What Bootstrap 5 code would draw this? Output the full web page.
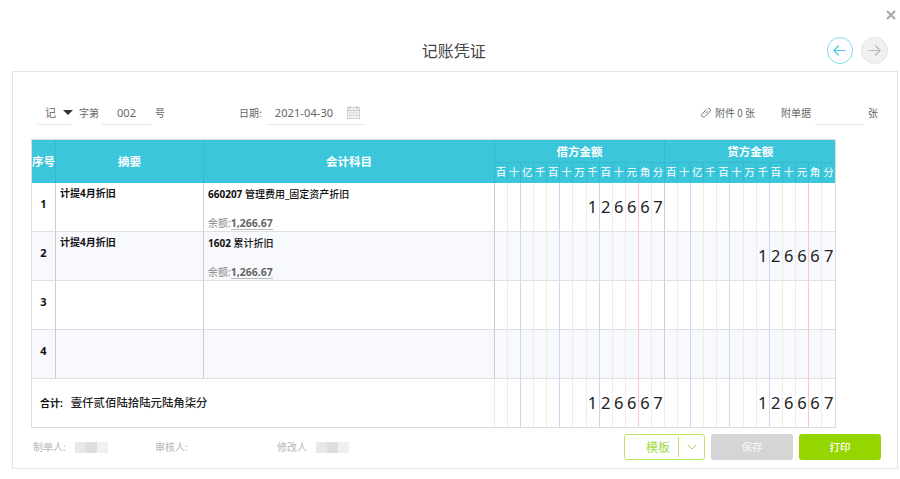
<!DOCTYPE html>
<html lang="zh">
<head>
<meta charset="utf-8">
<title>记账凭证</title>
<link href="https://cdn.jsdelivr.net/npm/bootstrap@5.3.0/dist/css/bootstrap.min.css" rel="stylesheet">
<style>
html,body{height:479px;overflow:hidden;background:#fff}
body{font-family:"Noto Sans","Noto Sans CJK SC",sans-serif;font-size:10px;color:#666;line-height:1.4}
.topline{height:37px;padding:10px 4px 0 0}
.closer{background:none;border:0;padding:0;width:10px;height:10px;display:block;line-height:0}
.headline{display:grid;grid-template-columns:1fr auto 1fr;align-items:center;height:27px;margin-bottom:7px;padding:0 12.5px 0 20px}
.headline h1{font-family:"Noto Sans CJK SC",sans-serif;font-size:16px;font-weight:400;color:#444;margin:0;padding-top:1px}
.circ{width:26.5px;height:26.5px;border-radius:50%;padding:0;display:flex;align-items:center;justify-content:center;background:#fff;border:1px solid #7fdcec;line-height:0}
.circ.off{background:#f0f0f0;border-color:#e4e4e4}
.sheet{margin-left:12px;width:886px;height:398px;border:1px solid #e4e4e4;padding:25px 16px 0 18px}
.bar{height:28px;padding:0 3px 0 6px;margin-bottom:14px;font-family:"Noto Sans CJK SC",sans-serif;color:#666}
.bar span{padding-top:4px}
.under{height:28px;border-bottom:1px solid #e6e6e6;display:flex;align-items:center}
.kind{width:34px;padding-left:8px;font-size:11px}
.tri{width:0;height:0;border-left:5px solid transparent;border-right:5px solid transparent;border-top:5px solid #333;margin:4px 0 0 7px}
.bar .ln{border:0;border-bottom:1px solid #e6e6e6;border-radius:0;height:28px;padding:4px 0 0;background:transparent;font:11px "Noto Sans","Noto Sans CJK SC",sans-serif;color:#666;box-shadow:none}
.w49{width:49px;flex:none}
.w97{width:97px;padding-left:7px;flex:none}
.datev{font:11px "Noto Sans",sans-serif;letter-spacing:.1px}
.gl8{margin-left:8px}.gl3{margin-left:3px}.gl4{margin-left:4px}.gl74{margin-left:74px}.gl6{margin-left:6px}
.gl26{margin-left:26px}
.bar .caln{margin-left:auto;margin-right:5px;line-height:0}
.bar .clip{line-height:0;margin-right:4px}
.voucher.table{width:805px;table-layout:fixed;border-collapse:separate;border-spacing:0;margin:0;border:1px solid #dcdcdc;font-family:"Noto Sans","Noto Sans CJK SC",sans-serif;color:#111}
.voucher.table>:not(caption)>*>*{padding:0;background:transparent;box-shadow:none;border:0;border-bottom:1px solid #dfdfdf;border-right:1px solid #ececec;vertical-align:middle}
.voucher thead tr{background:#3bc6dc}
.voucher.table>thead>tr>*{color:#fff;text-align:center;font-weight:700;border-color:#35b9cf;border-bottom-color:#35b9cf;font-family:"Noto Sans CJK SC",sans-serif}
.voucher thead tr.r1 th{height:23px;font-size:11.5px}
.voucher thead tr.r2 th{height:20px;font-size:10.5px;font-weight:400;white-space:nowrap;overflow:visible}
.voucher.table>thead>tr.r2>th,.voucher.table>thead>tr>th.big{border-bottom-color:#3bc6dc}
.voucher thead th.big{font-size:11.5px;height:43px}
.voucher tbody tr{height:49px}
.voucher tbody tr.alt{background:#f8f9fd}
.voucher tbody tr.tot{height:48px}
.voucher.table>tbody>tr.tot>td{border-bottom:0}
.voucher.table>tbody>tr>td.lft{border-right-color:#cccccc}
.voucher.table>tbody>tr>td.bl{border-right-color:#c6daf7}
.voucher.table>tbody>tr>td.rd{border-right-color:#fac8c8}
.voucher.table>tbody>tr>td.sp{border-right-color:#cfcfcf}
.voucher.table>tbody>tr.tot>td.sp{border-right-color:#ececec}
.voucher.table>tbody>tr.tot>td.lab{border-right-color:#ececec;padding-left:8px}
.voucher.table>tbody>tr>td:last-child{border-right:0}
.voucher.table>thead>tr>th:last-child{border-right:0}
.voucher.table>tbody>tr>td.seq{text-align:center;font-weight:700;font-size:11px;padding-bottom:6px}
.voucher.table>tbody>tr>td.txt{vertical-align:top}
.cellbox{height:48px;padding:3px 4px 0;display:flex;flex-direction:column;justify-content:space-between;font-weight:700;font-size:10px;font-family:"Noto Sans","Noto Sans CJK SC",sans-serif}
.acct{display:block;padding-top:1px}
.acct .zh{font-weight:500}
.bal{color:#888;font-weight:400;line-height:15px}
.bal b{color:#666;font-weight:700;border-bottom:1px solid #bbb;font-size:10.5px;display:inline-block;line-height:12px}
.voucher.table>tbody>tr>td.dg{text-align:center;font-size:16.5px;line-height:1;color:#222;font-family:"Noto Sans",sans-serif;font-weight:400;overflow:visible}
.lab b{font-size:10px;font-weight:700;margin-right:8px}
.lab span{font-size:11.4px;font-weight:500;font-family:"Noto Sans CJK SC",sans-serif;color:#222}
.foot{margin-top:6px;height:26px;margin-left:2px;font-family:"Noto Sans CJK SC",sans-serif;color:#b5b5b5}
.signer{width:122px;display:flex;align-items:center}
.smudge{width:33px;height:11px;margin-left:9px;background:linear-gradient(90deg,#e8e8e8 0 33%,#dedede 33% 66%,#f0f0f0 66% 100%)}
.btngrp{gap:6px}
.tplbtn{width:81px;height:26px;border:1px solid #b8e566;border-radius:3px;background:#fff;color:#a3d94a;display:flex;align-items:center;padding:0;font-size:12px}
.tplbtn .nm{width:53px;text-align:right;padding-right:8px}
.tplbtn .sepa{width:1px;height:20px;background:#b8e566}
.tplbtn .chev{flex:1;display:flex;justify-content:center;line-height:0}
.savebtn,.printbtn{width:82px;height:26px;border:0;border-radius:3px;color:#fff;font-size:10.5px;padding:0;font-weight:500}
.savebtn,.savebtn:disabled{background:#d5d5d5;color:#f3f3f3;opacity:1}
.printbtn,.printbtn:hover{background:#95d500;color:#fff}
</style>
</head>
<body>
<div class="d-flex justify-content-end topline">
  <button class="closer" aria-label="关闭"><svg width="10" height="10" viewBox="0 0 10 10"><path d="M1 1L9 9M9 1L1 9" stroke="#a8a8a8" stroke-width="2"/></svg></button>
</div>
<div class="headline">
  <span></span>
  <h1>记账凭证</h1>
  <div class="d-flex justify-content-end gap-2">
    <button class="circ" aria-label="上一张"><svg width="15" height="13" viewBox="0 0 15 13"><path d="M13.5 6.5H2M6.8 1.5L1.8 6.5L6.8 11.5" fill="none" stroke="#4cc8e2" stroke-width="1.2"/></svg></button>
    <button class="circ off" aria-label="下一张"><svg width="15" height="13" viewBox="0 0 15 13"><path d="M1.5 6.5H13M8.2 1.5L13.2 6.5L8.2 11.5" fill="none" stroke="#b8b8b8" stroke-width="1.2"/></svg></button>
  </div>
</div>
<div class="sheet">
  <div class="d-flex align-items-center bar">
    <div class="under kind"><span>记</span><i class="tri"></i></div>
    <span class="gl8">字第</span>
    <input class="form-control ln w49 gl3 text-center" value="002" aria-label="字第">
    <span class="gl4">号</span>
    <span class="gl74">日期:</span>
    <div class="under w97 gl6"><span class="datev">2021-04-30</span>
      <span class="caln"><svg width="13" height="13" viewBox="0 0 13 13"><rect x=".5" y="1.5" width="12" height="11" fill="#f1f1f1" stroke="#cfcfcf"/><path d="M0 4.5H13" stroke="#c4c4c4"/><path d="M3 0V3M10 0V3" stroke="#c4c4c4" stroke-width="1.2"/><path d="M2.5 7H10.5M2.5 9.5H10.5" stroke="#c9c9c9" stroke-dasharray="2 1"/></svg></span></div>
    <div class="ms-auto d-flex align-items-center">
      <span class="clip"><svg width="10" height="10" viewBox="0 0 10 10"><path d="M4.2 5.8L6.4 3.4M6.8 1.2C7.6.5 8.7.6 9.2 1.2C9.7 1.9 9.7 2.8 9 3.5L4.4 8.4C3.4 9.4 2 9.5 1.2 8.8C.4 8 .4 6.8 1.4 5.8L5.2 1.9" fill="none" stroke="#666" stroke-width=".9" transform="translate(0 -.2)"/></svg></span>
      <span>附件 0 张</span>
      <span class="gl26">附单据</span>
      <input class="form-control ln w49 gl4" aria-label="附单据">
      <span class="gl4">张</span>
    </div>
  </div>

  <table class="table voucher">
    <colgroup>
      <col style="width:24px"><col style="width:148px"><col style="width:291px">
      <col span="26" style="width:13.08px">
    </colgroup>
    <thead>
      <tr class="r1">
        <th rowspan="2" class="big">序号</th>
        <th rowspan="2" class="big">摘要</th>
        <th rowspan="2" class="big">会计科目</th>
        <th colspan="13">借方金额</th>
        <th colspan="13">贷方金额</th>
      </tr>
      <tr class="r2">
        <th>百</th><th>十</th><th>亿</th><th>千</th><th>百</th><th>十</th><th>万</th><th>千</th><th>百</th><th>十</th><th>元</th><th>角</th><th>分</th>
        <th>百</th><th>十</th><th>亿</th><th>千</th><th>百</th><th>十</th><th>万</th><th>千</th><th>百</th><th>十</th><th>元</th><th>角</th><th>分</th>
      </tr>
    </thead>
    <tbody>
      <tr>
        <td class="seq lft">1</td>
        <td class="lft txt"><div class="cellbox"><span>计提4月折旧</span></div></td>
        <td class="lft txt"><div class="cellbox"><span class="acct">660207 <span class="zh">管理费用_固定资产折旧</span></span><span class="bal">余额:<b>1,266.67</b></span></div></td>
        <td></td><td class="bl"></td><td></td><td></td><td class="bl"></td><td></td><td></td><td class="dg bl">1</td><td class="dg">2</td><td class="dg">6</td><td class="dg rd">6</td><td class="dg">6</td><td class="dg sp">7</td>
        <td></td><td class="bl"></td><td></td><td></td><td class="bl"></td><td></td><td></td><td class="bl"></td><td></td><td></td><td class="rd"></td><td></td><td></td>
      </tr>
      <tr class="alt">
        <td class="seq lft">2</td>
        <td class="lft txt"><div class="cellbox"><span>计提4月折旧</span></div></td>
        <td class="lft txt"><div class="cellbox"><span class="acct">1602 <span class="zh">累计折旧</span></span><span class="bal">余额:<b>1,266.67</b></span></div></td>
        <td></td><td class="bl"></td><td></td><td></td><td class="bl"></td><td></td><td></td><td class="bl"></td><td></td><td></td><td class="rd"></td><td></td><td class="sp"></td>
        <td></td><td class="bl"></td><td></td><td></td><td class="bl"></td><td></td><td></td><td class="dg bl">1</td><td class="dg">2</td><td class="dg">6</td><td class="dg rd">6</td><td class="dg">6</td><td class="dg">7</td>
      </tr>
      <tr>
        <td class="seq lft">3</td><td class="lft"></td><td class="lft"></td>
        <td></td><td class="bl"></td><td></td><td></td><td class="bl"></td><td></td><td></td><td class="bl"></td><td></td><td></td><td class="rd"></td><td></td><td class="sp"></td>
        <td></td><td class="bl"></td><td></td><td></td><td class="bl"></td><td></td><td></td><td class="bl"></td><td></td><td></td><td class="rd"></td><td></td><td></td>
      </tr>
      <tr class="alt">
        <td class="seq lft">4</td><td class="lft"></td><td class="lft"></td>
        <td></td><td class="bl"></td><td></td><td></td><td class="bl"></td><td></td><td></td><td class="bl"></td><td></td><td></td><td class="rd"></td><td></td><td class="sp"></td>
        <td></td><td class="bl"></td><td></td><td></td><td class="bl"></td><td></td><td></td><td class="bl"></td><td></td><td></td><td class="rd"></td><td></td><td></td>
      </tr>
      <tr class="tot">
        <td colspan="3" class="lab"><b>合计:</b><span>壹仟贰佰陆拾陆元陆角柒分</span></td>
        <td></td><td class="bl"></td><td></td><td></td><td class="bl"></td><td></td><td></td><td class="dg bl">1</td><td class="dg">2</td><td class="dg">6</td><td class="dg rd">6</td><td class="dg">6</td><td class="dg sp">7</td>
        <td></td><td class="bl"></td><td></td><td></td><td class="bl"></td><td></td><td></td><td class="dg bl">1</td><td class="dg">2</td><td class="dg">6</td><td class="dg rd">6</td><td class="dg">6</td><td class="dg">7</td>
      </tr>
    </tbody>
  </table>

  <div class="d-flex align-items-center foot">
    <div class="signer"><span>制单人:</span><i class="smudge"></i></div>
    <div class="signer"><span>审核人:</span></div>
    <div class="signer"><span>修改人</span><i class="smudge"></i></div>
    <div class="ms-auto d-flex btngrp">
      <button class="btn tplbtn"><span class="nm">模板</span><span class="sepa"></span><span class="chev"><svg width="10" height="6" viewBox="0 0 10 6"><path d="M.8.8L5 5L9.2.8" fill="none" stroke="#a3d94a" stroke-width="1"/></svg></span></button>
      <button class="btn savebtn" disabled>保存</button>
      <button class="btn printbtn">打印</button>
    </div>
  </div>
</div>
</body>
</html>
